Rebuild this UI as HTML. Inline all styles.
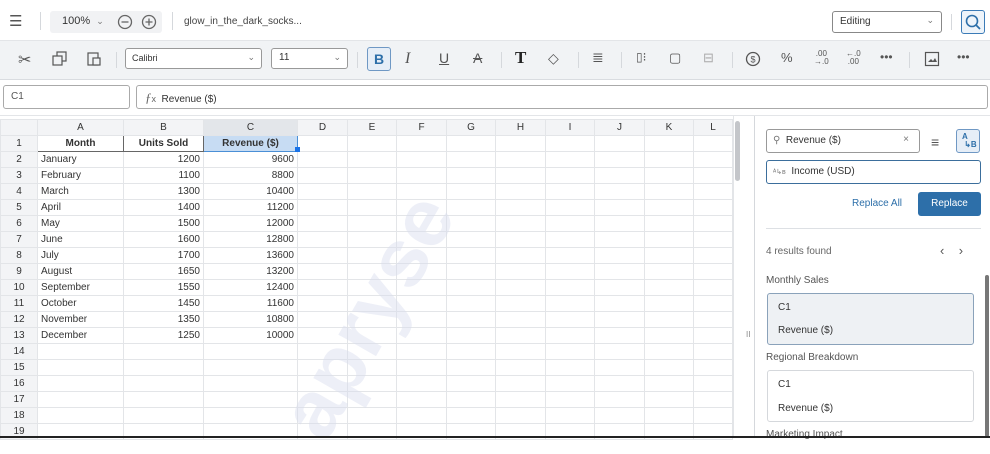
<!DOCTYPE html><html><head><meta charset="utf-8"><style>
*{box-sizing:border-box;margin:0;padding:0}
body{width:990px;height:438px;overflow:hidden;background:#fff;font-family:"Liberation Sans",sans-serif;font-size:11px;color:#333;position:relative}
.abs{position:absolute}
.ic{position:absolute;color:#555;font-size:14px;text-align:center}
.sep{position:absolute;width:1px;background:#d5d8dc}
table{border-collapse:collapse;position:absolute;left:0;top:119px;table-layout:fixed}
td{border:1px solid #e3e5e8;height:16px;padding:0 3px;font-size:10px;white-space:nowrap;overflow:hidden}
td.h{background:#f3f4f6;text-align:center;color:#333}
td.r{text-align:right}
</style></head><body>
<div class="abs" style="left:0;top:0;width:990px;height:40px;background:#fff"></div>
<div class="ic" style="left:9px;top:12px;font-size:15px">☰</div>
<div class="sep" style="left:40px;top:12px;height:18px"></div>
<div class="abs" style="left:50px;top:11px;width:112px;height:22px;background:#f1f2f4;border-radius:3px"></div>
<div class="abs" style="left:62px;top:15px;font-size:11px">100%&nbsp; <span style="color:#777;font-size:9px">⌄</span></div>
<svg class="abs" style="left:117px;top:14px" width="46" height="16"><circle cx="8" cy="8" r="6.5" fill="none" stroke="#666" stroke-width="1.3"/><path d="M4.5 8h7" stroke="#666" stroke-width="1.3"/><circle cx="32" cy="8" r="6.5" fill="none" stroke="#666" stroke-width="1.3"/><path d="M28.5 8h7M32 4.5v7" stroke="#666" stroke-width="1.3"/></svg>
<div class="sep" style="left:172px;top:12px;height:18px"></div>
<div class="abs" style="left:184px;top:16px;font-size:10px;color:#444">glow_in_the_dark_socks...</div>
<div class="abs" style="left:832px;top:11px;width:110px;height:22px;border:1px solid #888;border-radius:3px;padding:4px 7px;font-size:10px">Editing<span style="position:absolute;right:7px;top:3px;color:#777;font-size:9px">⌄</span></div>
<div class="sep" style="left:951px;top:14px;height:16px"></div>
<div class="abs" style="left:961px;top:10px;width:24px;height:24px;border:1px solid #3b7bb7;border-radius:3px;background:#eef4fa"></div>
<svg class="abs" style="left:964px;top:13px" width="18" height="18"><circle cx="8" cy="8" r="5.5" fill="none" stroke="#2d6fa9" stroke-width="1.6"/><path d="M12 12l4 4" stroke="#2d6fa9" stroke-width="1.8"/></svg>
<div class="abs" style="left:0;top:40px;width:990px;height:40px;background:#f1f3f5;border-top:1px solid #e3e5e8;border-bottom:1px solid #d9dce0"></div>
<div class="ic" style="left:18px;top:50px;font-size:16px">✂</div>
<svg class="abs" style="left:52px;top:51px" width="16" height="16"><rect x="5" y="1" width="9" height="9" fill="none" stroke="#555" stroke-width="1.2"/><rect x="1" y="5" width="9" height="9" fill="#f1f3f5" stroke="#555" stroke-width="1.2"/></svg>
<svg class="abs" style="left:86px;top:51px" width="16" height="16"><rect x="2" y="2" width="10" height="12" fill="none" stroke="#555" stroke-width="1.2"/><rect x="7" y="7" width="7" height="7" fill="#f1f3f5" stroke="#555" stroke-width="1.2"/></svg>
<div class="sep" style="left:116px;top:52px;height:16px"></div>
<div class="abs" style="left:125px;top:48px;width:137px;height:21px;border:1px solid #999;border-radius:3px;background:#fff;padding:4px 6px;font-size:9px">Calibri<span style="position:absolute;right:6px;top:3px;color:#777">⌄</span></div>
<div class="abs" style="left:271px;top:48px;width:77px;height:21px;border:1px solid #999;border-radius:3px;background:#fff;padding:3px 7px;font-size:10px">11<span style="position:absolute;right:6px;top:3px;color:#777;font-size:9px">⌄</span></div>
<div class="sep" style="left:357px;top:52px;height:16px"></div>
<div class="abs" style="left:367px;top:47px;width:24px;height:24px;border:1px solid #6f98c4;border-radius:3px;background:#e6eef7;color:#2d6fa9;font-weight:bold;font-size:14px;text-align:center;line-height:22px">B</div>
<div class="ic" style="left:405px;top:50px;font-style:italic;font-family:'Liberation Serif',serif;font-size:16px">I</div>
<div class="ic" style="left:439px;top:50px;text-decoration:underline">U</div>
<div class="ic" style="left:473px;top:50px;text-decoration:line-through">A</div>
<div class="sep" style="left:501px;top:52px;height:16px"></div>
<div class="ic" style="left:515px;top:48px;font-family:'Liberation Serif',serif;font-weight:bold;font-size:17px;color:#222">T</div>
<div class="ic" style="left:548px;top:50px">◇</div>
<div class="sep" style="left:578px;top:52px;height:16px"></div>
<div class="ic" style="left:592px;top:49px">≣</div>
<div class="sep" style="left:621px;top:52px;height:16px"></div>
<div class="ic" style="left:636px;top:50px;font-size:12px">▯⁝</div>
<div class="ic" style="left:669px;top:50px;font-size:13px">▢</div>
<div class="ic" style="left:703px;top:50px;font-size:13px;color:#aaa">⊟</div>
<div class="sep" style="left:732px;top:52px;height:16px"></div>
<svg class="abs" style="left:745px;top:51px" width="16" height="16"><circle cx="8" cy="8" r="6.5" fill="none" stroke="#555" stroke-width="1.3"/><text x="8" y="11.5" font-size="9" text-anchor="middle" fill="#555" font-family="Liberation Sans">$</text></svg>
<div class="ic" style="left:781px;top:50px;font-size:13px">%</div>
<div class="ic" style="left:814px;top:50px;font-size:8px;line-height:8px">.00<br>→.0</div>
<div class="ic" style="left:846px;top:50px;font-size:8px;line-height:8px">←.0<br>.00</div>
<div class="ic" style="left:880px;top:50px;font-size:12px">•••</div>
<div class="sep" style="left:909px;top:52px;height:16px"></div>
<svg class="abs" style="left:924px;top:51px" width="16" height="16"><rect x="1.5" y="1.5" width="13" height="13" fill="none" stroke="#555" stroke-width="1.2"/><path d="M4 11l3-3 2 2 2-3 2 4z" fill="#555"/></svg>
<div class="ic" style="left:957px;top:50px;font-size:12px">•••</div>
<div class="abs" style="left:3px;top:85px;width:127px;height:24px;border:1px solid #aaa;border-radius:3px;padding:5px 7px;font-size:10px;color:#555">C1</div>
<div class="abs" style="left:136px;top:85px;width:852px;height:24px;border:1px solid #aaa;border-radius:3px;padding:4px 8px;font-size:10px"><span style="font-family:'Liberation Serif',serif;font-style:italic;color:#666;font-size:13px">ƒ</span><span style="color:#666;font-size:9px">x</span>&nbsp; Revenue ($)</div>
<div class="abs" style="left:0;top:115px;width:990px;height:1px;background:#e3e5e8"></div>
<table>
<colgroup><col style="width:37px"><col style="width:86px"><col style="width:80px"><col style="width:94px"><col style="width:50px"><col style="width:49px"><col style="width:50px"><col style="width:49px"><col style="width:50px"><col style="width:49px"><col style="width:50px"><col style="width:49px"><col style="width:39px"></colgroup>
<tr><td class="h"></td><td class="h">A</td><td class="h">B</td><td class="h" style="background:#e3e6ea">C</td><td class="h">D</td><td class="h">E</td><td class="h">F</td><td class="h">G</td><td class="h">H</td><td class="h">I</td><td class="h">J</td><td class="h">K</td><td class="h">L</td></tr>
<tr><td class="h">1</td><td style="text-align:center;font-weight:bold;border:1px solid #666">Month</td><td style="text-align:center;font-weight:bold;border:1px solid #666">Units Sold</td><td style="text-align:center;font-weight:bold;background:#c7dcf3;border:1px solid #4a8fd6">Revenue ($)</td><td></td><td></td><td></td><td></td><td></td><td></td><td></td><td></td><td></td></tr>
<tr><td class="h">2</td><td>January</td><td class="r">1200</td><td class="r">9600</td><td></td><td></td><td></td><td></td><td></td><td></td><td></td><td></td><td></td></tr>
<tr><td class="h">3</td><td>February</td><td class="r">1100</td><td class="r">8800</td><td></td><td></td><td></td><td></td><td></td><td></td><td></td><td></td><td></td></tr>
<tr><td class="h">4</td><td>March</td><td class="r">1300</td><td class="r">10400</td><td></td><td></td><td></td><td></td><td></td><td></td><td></td><td></td><td></td></tr>
<tr><td class="h">5</td><td>April</td><td class="r">1400</td><td class="r">11200</td><td></td><td></td><td></td><td></td><td></td><td></td><td></td><td></td><td></td></tr>
<tr><td class="h">6</td><td>May</td><td class="r">1500</td><td class="r">12000</td><td></td><td></td><td></td><td></td><td></td><td></td><td></td><td></td><td></td></tr>
<tr><td class="h">7</td><td>June</td><td class="r">1600</td><td class="r">12800</td><td></td><td></td><td></td><td></td><td></td><td></td><td></td><td></td><td></td></tr>
<tr><td class="h">8</td><td>July</td><td class="r">1700</td><td class="r">13600</td><td></td><td></td><td></td><td></td><td></td><td></td><td></td><td></td><td></td></tr>
<tr><td class="h">9</td><td>August</td><td class="r">1650</td><td class="r">13200</td><td></td><td></td><td></td><td></td><td></td><td></td><td></td><td></td><td></td></tr>
<tr><td class="h">10</td><td>September</td><td class="r">1550</td><td class="r">12400</td><td></td><td></td><td></td><td></td><td></td><td></td><td></td><td></td><td></td></tr>
<tr><td class="h">11</td><td>October</td><td class="r">1450</td><td class="r">11600</td><td></td><td></td><td></td><td></td><td></td><td></td><td></td><td></td><td></td></tr>
<tr><td class="h">12</td><td>November</td><td class="r">1350</td><td class="r">10800</td><td></td><td></td><td></td><td></td><td></td><td></td><td></td><td></td><td></td></tr>
<tr><td class="h">13</td><td>December</td><td class="r">1250</td><td class="r">10000</td><td></td><td></td><td></td><td></td><td></td><td></td><td></td><td></td><td></td></tr>
<tr><td class="h">14</td><td></td><td></td><td></td><td></td><td></td><td></td><td></td><td></td><td></td><td></td><td></td><td></td></tr>
<tr><td class="h">15</td><td></td><td></td><td></td><td></td><td></td><td></td><td></td><td></td><td></td><td></td><td></td><td></td></tr>
<tr><td class="h">16</td><td></td><td></td><td></td><td></td><td></td><td></td><td></td><td></td><td></td><td></td><td></td><td></td></tr>
<tr><td class="h">17</td><td></td><td></td><td></td><td></td><td></td><td></td><td></td><td></td><td></td><td></td><td></td><td></td></tr>
<tr><td class="h">18</td><td></td><td></td><td></td><td></td><td></td><td></td><td></td><td></td><td></td><td></td><td></td><td></td></tr>
<tr><td class="h">19</td><td></td><td></td><td></td><td></td><td></td><td></td><td></td><td></td><td></td><td></td><td></td><td></td></tr>
</table>
<div class="abs" style="left:295px;top:147px;width:5px;height:5px;background:#1a73e8"></div>
<div class="abs" style="left:368px;top:316px;transform:translate(-50%,-50%) rotate(-60deg);font-size:82px;font-weight:bold;color:rgba(215,219,238,0.45);white-space:nowrap">apryse</div>
<div class="abs" style="left:733px;top:116px;width:10px;height:322px;background:#fff;border-left:1px solid #e3e5e8"></div>
<div class="abs" style="left:735px;top:121px;width:5px;height:60px;background:#c4c6ca;border-radius:3px"></div>
<div class="abs" style="left:746px;top:330px;font-size:8px;color:#888">II</div>
<div class="abs" style="left:754px;top:116px;width:1px;height:322px;background:#d5d8dc"></div>
<div class="abs" style="left:766px;top:129px;width:154px;height:24px;border:1px solid #999;border-radius:3px;padding:5px 6px;font-size:10px"><span style="color:#777">⚲</span>&nbsp; Revenue ($)<span style="position:absolute;right:10px;top:4px;color:#777">×</span></div>
<div class="abs" style="left:931px;top:134px;font-size:14px;color:#555">≡</div>
<div class="abs" style="left:956px;top:129px;width:24px;height:24px;border:1px solid #6f98c4;border-radius:3px;background:#e6eef7;color:#2d6fa9;font-size:8px;font-weight:bold;line-height:8px;padding:3px 5px">A<br>&nbsp;↳B</div>
<div class="abs" style="left:766px;top:160px;width:215px;height:24px;border:1px solid #3b6e9c;border-radius:3px;padding:5px 6px;font-size:10px"><span style="color:#777;font-size:7px">ᴬ↳ʙ</span>&nbsp; Income (USD)</div>
<div class="abs" style="left:852px;top:198px;font-size:10px;color:#2d6fa9">Replace All</div>
<div class="abs" style="left:918px;top:192px;width:63px;height:24px;background:#2d6fa9;border-radius:3px;color:#fff;font-size:10px;text-align:center;line-height:24px">Replace</div>
<div class="abs" style="left:766px;top:228px;width:215px;height:1px;background:#dde0e4"></div>
<div class="abs" style="left:766px;top:246px;font-size:10px;color:#666">4 results found</div>
<div class="abs" style="left:940px;top:243px;font-size:13px;color:#555">‹&nbsp;&nbsp;&nbsp; ›</div>
<div class="abs" style="left:766px;top:275px;font-size:10px;color:#555">Monthly Sales</div>
<div class="abs" style="left:767px;top:293px;width:207px;height:52px;border:1px solid #8aa2ba;border-radius:3px;background:#eef1f4;padding:8px 10px;font-size:10px"><div style="line-height:12px">C1</div><div style="margin-top:11px;line-height:12px">Revenue ($)</div></div>
<div class="abs" style="left:766px;top:352px;font-size:10px;color:#555">Regional Breakdown</div>
<div class="abs" style="left:767px;top:370px;width:207px;height:52px;border:1px solid #d5d8dc;border-radius:3px;padding:8px 10px;font-size:10px"><div style="line-height:12px">C1</div><div style="margin-top:12px;line-height:12px">Revenue ($)</div></div>
<div class="abs" style="left:766px;top:429px;font-size:10px;color:#555">Marketing Impact</div>
<div class="abs" style="left:985px;top:275px;width:4px;height:162px;background:#777;border-radius:2px"></div>
<div class="abs" style="left:0;top:436px;width:990px;height:2px;background:#222"></div>
</body></html>
